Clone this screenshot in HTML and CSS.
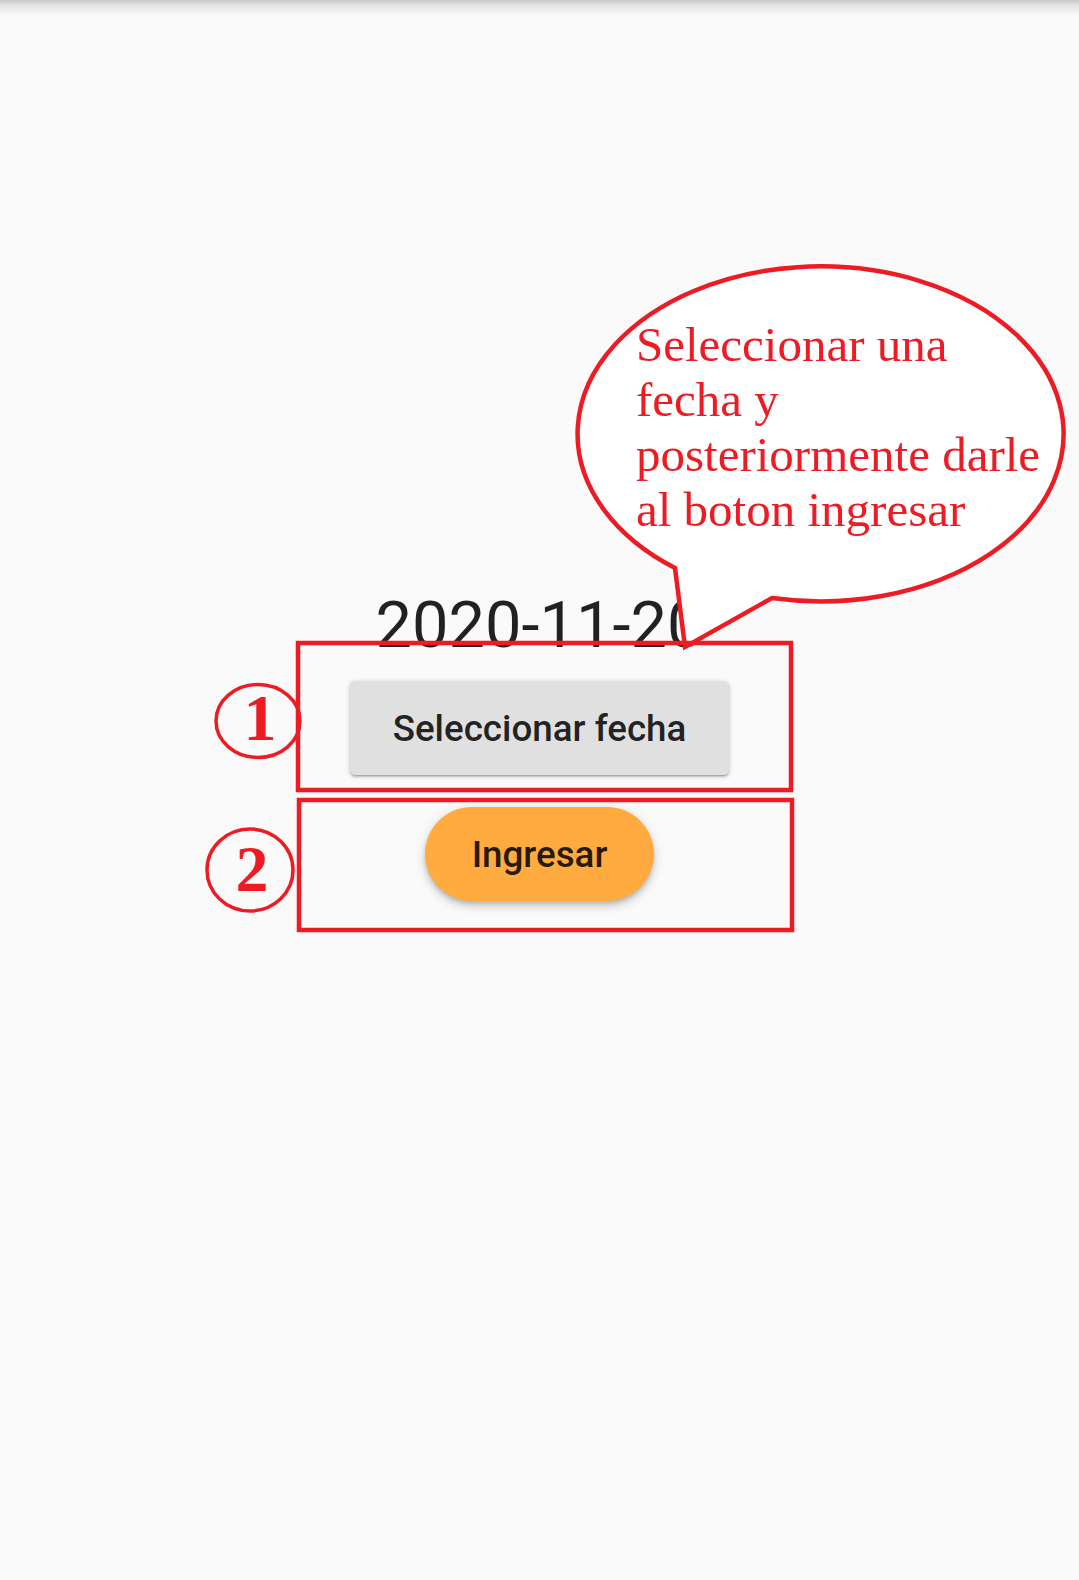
FILE: index.html
```html
<!DOCTYPE html>
<html lang="es">
<head>
<meta charset="utf-8">
<title>Seleccionar fecha</title>
<link rel="stylesheet" href="styles.css">
</head>
<body>
<div class="screen">
  <main class="content">
    <div class="date">2020-11-20</div>
    <button class="btn btn-raised">Seleccionar fecha</button>
    <button class="btn btn-pill">Ingresar</button>
  </main>

  <svg class="annotations" width="1079" height="1580" viewBox="0 0 1079 1580" aria-hidden="true">
    <path class="bubble" d="M675 568 L685 647 L772 598 A243 167.5 0 1 0 675 568 Z"/>
    <rect class="mark" x="298" y="643" width="493" height="147"/>
    <rect class="mark" x="299" y="800" width="493" height="130"/>
    <ellipse class="ring" cx="258" cy="721" rx="42" ry="36.5"/>
    <ellipse class="ring" cx="250" cy="870" rx="43" ry="41"/>
  </svg>

  <div class="note-text">
    <span class="note-line">Seleccionar una</span>
    <span class="note-line">fecha y</span>
    <span class="note-line">posteriormente darle</span>
    <span class="note-line">al boton ingresar</span>
  </div>
  <div class="num num-1">1</div>
  <div class="num num-2">2</div>
</div>
</body>
</html>
```

FILE: styles.css
```css
html, body {
  margin: 0;
  padding: 0;
}

body {
  background: #fafafa;
  font-family: Roboto, "Noto Sans", sans-serif;
}

.screen {
  position: relative;
  width: 1079px;
  height: 1580px;
  overflow: hidden;
  background: linear-gradient(to bottom, #c9c9c9 0, #e6e6e6 6px, #fafafa 16px) no-repeat #fafafa;
}

.content {
  display: flex;
  flex-direction: column;
  align-items: center;
  padding-top: 588px;
}

.date {
  font-family: Roboto, sans-serif;
  font-size: 65px;
  line-height: 74px;
  color: rgba(0, 0, 0, 0.87);
}

.btn {
  display: flex;
  align-items: center;
  justify-content: center;
  height: 94px;
  border: none;
  font-family: Roboto, sans-serif;
  font-weight: 500;
  font-size: 36.75px;
  color: rgba(0, 0, 0, 0.87);
  cursor: pointer;
}

.btn-raised {
  margin-top: 19px;
  padding: 0 43px;
  background: #e0e0e0;
  border-radius: 5px;
  box-shadow: 0 2px 2px rgba(0, 0, 0, 0.14), 0 3px 1px -2px rgba(0, 0, 0, 0.12), 0 1px 5px rgba(0, 0, 0, 0.2);
}

.btn-pill {
  margin-top: 32px;
  padding: 0 47px;
  background: #ffab40;
  border-radius: 47px;
  box-shadow: 0 6px 10px rgba(0, 0, 0, 0.12), 0 1px 14px rgba(0, 0, 0, 0.08), 0 3px 5px -1px rgba(0, 0, 0, 0.18);
}

.annotations {
  position: absolute;
  left: 0;
  top: 0;
  pointer-events: none;
}

.bubble {
  fill: #ffffff;
  stroke: #ed1c24;
  stroke-width: 4.5;
  stroke-linejoin: miter;
}

.mark {
  fill: none;
  stroke: #ed1c24;
  stroke-width: 4.5;
}

.ring {
  fill: none;
  stroke: #ed1c24;
  stroke-width: 3.5;
}

.note-text {
  position: absolute;
  left: 636px;
  top: 317px;
  display: flex;
  flex-direction: column;
  font-family: "Liberation Serif", "Times New Roman", serif;
  font-size: 49px;
  line-height: 55px;
  color: #ed1c24;
  white-space: nowrap;
}

.num {
  position: absolute;
  width: 80px;
  text-align: center;
  font-family: "Liberation Serif", "Times New Roman", serif;
  font-weight: 700;
  font-size: 66px;
  line-height: 66px;
  color: #ed1c24;
}

.num-1 {
  left: 220px;
  top: 685px;
}

.num-2 {
  left: 212px;
  top: 836px;
}
```
